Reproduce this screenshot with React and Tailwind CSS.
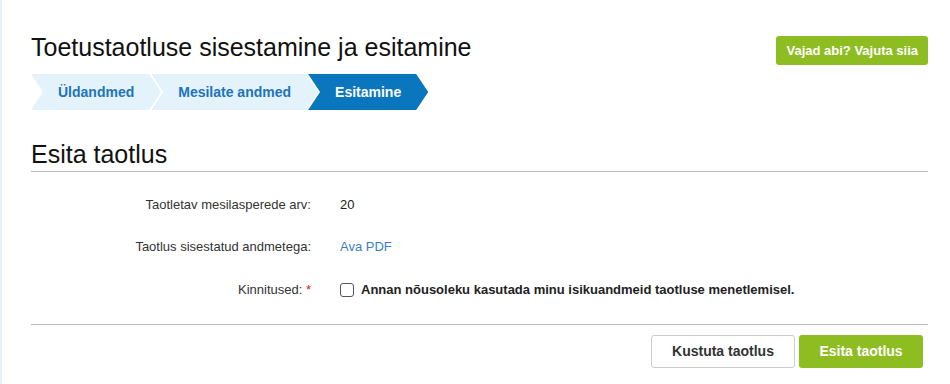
export default function App() {
    const steps = [
        { label: 'Üldandmed', active: false },
        { label: 'Mesilate andmed', active: false },
        { label: 'Esitamine', active: true },
    ];

    return (
        <div className="min-h-[384px] bg-white border-l-2 border-[#e6f3fc]" style={{ fontFamily: '"Liberation Sans", Arial, sans-serif' }}>
            <div className="pl-[29px] pr-[22px] pt-[32px]">
                {/* Header */}
                <div className="flex items-start justify-between">
                    <h1 className="text-[25px] leading-[30px] text-[#111]">Toetustaotluse sisestamine ja esitamine</h1>
                    <button className="mt-[4px] h-[29px] px-[10px] rounded-[3px] bg-[#8ebd22] text-white text-[13px] font-bold">
                        Vajad abi? Vajuta siia
                    </button>
                </div>

                {/* Stepper */}
                <div className="flex mt-[9px]">
                    {steps.map((s, i) => (
                        <div
                            key={i}
                            className={`h-[36px] flex items-center px-[27px] text-[14px] font-bold ${i > 0 ? '-ml-[10px]' : ''} ${s.active ? 'bg-[#0a76bd] text-white' : 'bg-[#e4f2fc] text-[#1c74b9]'} [clip-path:polygon(0_0,calc(100%-12px)_0,100%_50%,calc(100%-12px)_100%,0_100%,12px_50%)]`}
                        >
                            {s.label}
                        </div>
                    ))}
                </div>

                {/* Section */}
                <h2 className="mt-[30px] text-[25px] leading-[28px] text-[#111] pb-[3px] border-b border-[#bbbbbb]">Esita taotlus</h2>

                <div className="pt-[25px] text-[13px]">
                    <div className="flex items-center h-[16px]">
                        <div className="w-[280px] text-right text-[#333]">Taotletav mesilasperede arv:</div>
                        <div className="ml-[29px] text-[#222]">20</div>
                    </div>
                    <div className="flex items-center h-[16px] mt-[26px]">
                        <div className="w-[280px] text-right text-[#333]">Taotlus sisestatud andmetega:</div>
                        <a className="ml-[29px] text-[#3a7fc1]">Ava PDF</a>
                    </div>
                    <div className="flex items-center h-[16px] mt-[27px]">
                        <div className="w-[280px] text-right text-[#333]">
                            Kinnitused: <span className="text-[#e02020]">*</span>
                        </div>
                        <label className="ml-[29px] flex items-center">
                            <span className="w-[14px] h-[14px] rounded-[3px] border border-[#555] bg-white" />
                            <span className="ml-[7px] font-bold text-[#222]">Annan nõusoleku kasutada minu isikuandmeid taotluse menetlemisel.</span>
                        </label>
                    </div>
                </div>

                <div className="mt-[26px] border-t border-[#bbbbbb] pt-[10px] flex justify-end gap-[4px] pr-[5px]">
                    <button className="h-[33px] w-[144px] rounded-[3px] border border-[#cccccc] bg-white text-[14px] font-bold text-[#333]">
                        Kustuta taotlus
                    </button>
                    <button className="h-[33px] w-[124px] rounded-[3px] bg-[#8ebd22] text-[14px] font-bold text-white">
                        Esita taotlus
                    </button>
                </div>
            </div>
        </div>
    );
}
